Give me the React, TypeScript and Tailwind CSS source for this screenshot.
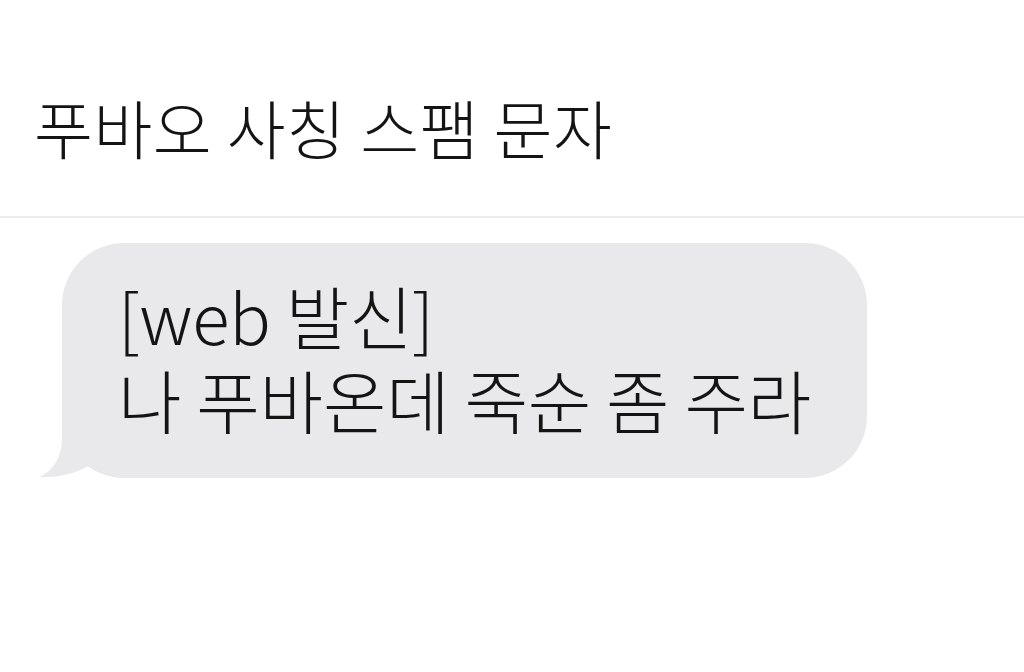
import React from "react";

export default function App() {
  const font = { fontFamily: '"Noto Sans CJK KR", "Noto Sans", sans-serif' };
  return (
    <div className="w-[1024px] h-[672px] bg-white overflow-hidden text-[#141414]" style={font}>
      <div className="h-[216px] flex items-center pl-[34px] pt-[36px]">
        <div className="text-[64px] leading-none tracking-[0.5px] font-light">푸바오 사칭 스팸 문자</div>
      </div>
      <div className="h-[2px] bg-[#ececec]" />
      <div className="pt-[25px] pl-[62px]">
        <div className="relative w-[805px] h-[235px]">
          <svg className="absolute left-[-22px] bottom-0" width="80" height="80" viewBox="0 0 80 80">
            <path d="M22 0 L22 40 C22 58 14 72 0 79 C22 80 40 74 53 65 L70 0 Z" fill="#e9e9eb" />
          </svg>
          <div className="relative w-full h-full rounded-[62px] bg-[#e9e9eb] pl-[56px] pt-[30px]">
            <p className="text-[69px] leading-[84px] tracking-[-0.2px] font-light">
              [web 발신]
              <br />
              나 푸바온데 죽순 좀 주라
            </p>
          </div>
        </div>
      </div>
    </div>
  );
}
